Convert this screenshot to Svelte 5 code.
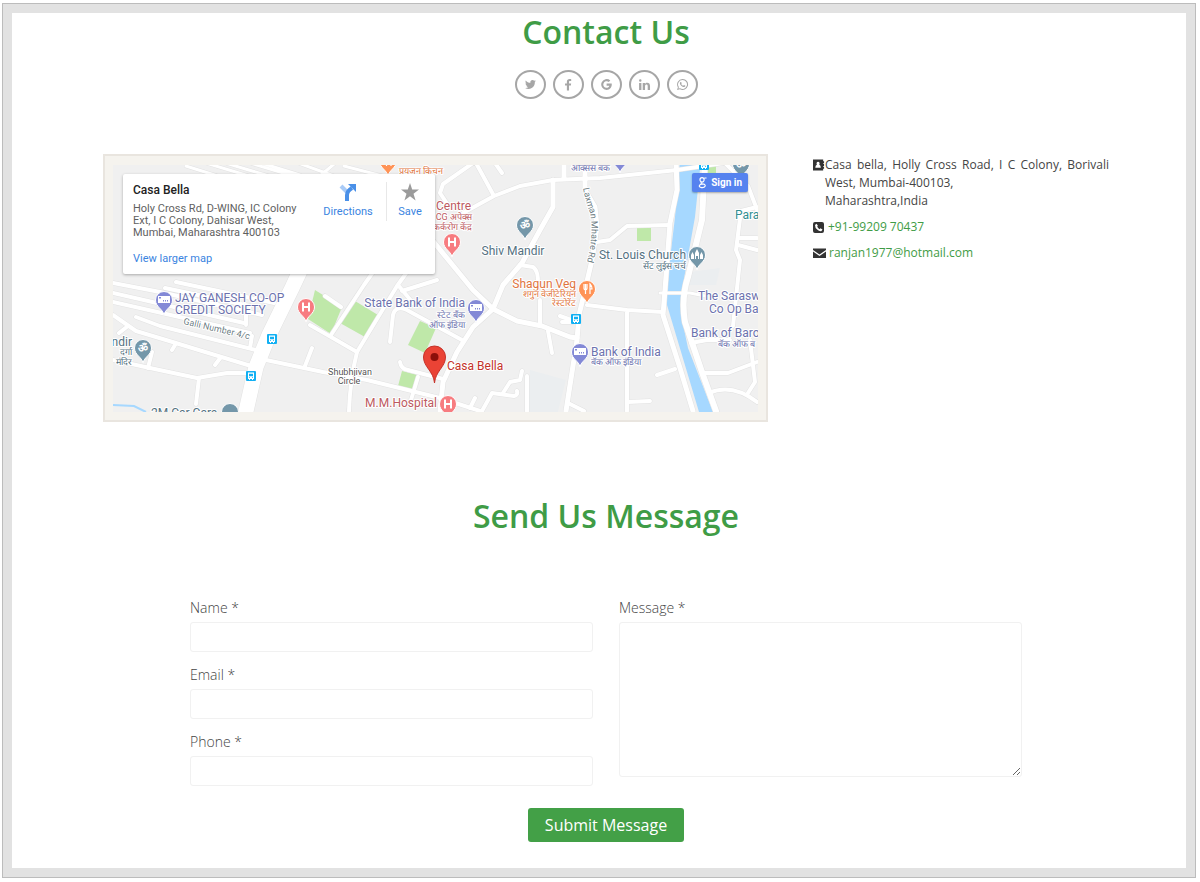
<script>
  // Contact page: social links, location map with address, message form.

  let form = $state({ name: "", email: "", phone: "", message: "" });

  const socials = [
    { name: "Twitter", d: "M22 5.8c-.7.3-1.5.5-2.4.6.9-.5 1.5-1.3 1.8-2.3-.8.5-1.7.8-2.6 1A4.1 4.1 0 0 0 11.8 8.9C8.4 8.7 5.3 7 3.3 4.5c-1.1 1.9-.5 4.3 1.3 5.5-.7 0-1.3-.2-1.9-.5 0 2 1.4 3.7 3.3 4.1-.6.2-1.2.2-1.9.1.5 1.6 2 2.8 3.9 2.9A8.3 8.3 0 0 1 2 18.3 11.7 11.7 0 0 0 20 7.9c.8-.6 1.5-1.3 2-2.1z" },
    { name: "Facebook", d: "M17 2.2V5.7h-2.1c-1.6 0-1.9.8-1.9 1.9V10h3.9l-.5 3.9H13V23H9v-9.1H5.6V10H9V7.1C9 3.8 11 2 14 2c1.4 0 2.6.1 3 .2z" },
    { name: "Google", d: "M12.2 10.3h9.4c.9 6.5-3 11.7-9.4 11.7a10 10 0 1 1 6.8-17.4l-2.9 2.8A6.1 6.1 0 1 0 12 18.2c3 0 4.8-1.7 5.3-4h-5.1z" },
    { name: "LinkedIn", d: "M2 9h4.3v13H2zM4.2 2.5a2.3 2.3 0 1 1 0 4.6 2.3 2.3 0 0 1 0-4.6zM8.7 9h4.2v1.9c.7-1.2 2-2.2 4.2-2.2 3.3 0 5.1 2.2 5.1 6.1V22h-4.3v-6.9c0-1.7-.7-2.9-2.2-2.9-1.7 0-2.7 1.2-2.7 3V22H8.7z" },
    { name: "WhatsApp", d: "M12 2a9.9 9.9 0 0 0-8.5 15L2 22l5.2-1.4A10 10 0 1 0 12 2zm0 1.8a8.2 8.2 0 1 1-4.5 15l-3 .8.8-2.9A8.2 8.2 0 0 1 12 3.8zM8.5 7.3c-.7.2-1.4 1-1.4 2.2 0 2.6 4.6 7.6 8 7.3 1.5-.2 2.4-1.2 2.3-2.5l-2.7-1.3-1.3 1.5c-1.7-.6-3-1.9-3.8-3.5l1-1.2-1.2-2.5z" },
  ];

  // --- map geometry ---
  const greens = [
    "315,290 342,307 331,334 308,319",
    "355,301 378,315 365,337 340,323",
    "420,321 436,328 425,353 408,345",
    "402,371 418,375 412,391 398,386",
    "637,227 651,227 651,241 637,241",
    "706,160 716,160 716,174 706,174",
  ];

  const roads = [
    { w: 3, d: "M186 166L240 183M196 160L262 180M222 162L276 178M240 160L290 175M258 162L300 175M290 160L334 176M334 164L320 176M344 166L390 178" },
    { w: 4, d: "M113 283L160 292L262 315M176 282L274 303M113 293L244 323M113 302L250 333M165 288L250 306" },
    { w: 4, d: "M136 317L160 326L256 350M113 315L136 331L166 340L251 366M119 333L128 326M246 315V325M252 336L250 348M175 345L172 350M215 365L221 357M152 352L148 368" },
    { w: 4, d: "M113 360L150 368L197 378L227 373L247 373M199 378L196 404" },
    { w: 4, d: "M266 360L323 372L367 380L440 398L480 411M312 348L305 366M310 325L331 337L357 352M325 296L341 307" },
    { w: 4, d: "M331 335L364 285L378 265M357 352L397 286L412 265M357 352Q350 380 349 411M402 291L437 280M398 285L413 303" },
    { w: 4, d: "M390 342L393 315Q395 306 405 309L462 340" },
    { w: 5, d: "M428 235L473 290L493 309L517 321L542 326L570 337L577 338" },
    { w: 5, d: "M553 180V207L540 230L522 263L503 285L493 309L473 327L457 352L443 382L440 411" },
    { w: 4, d: "M448 205L440 193L443 184L473 163M476 163L494 196M495 163L502 173M463 213L494 196L520 186L553 180L600 178L677 170L757 158" },
    { w: 4, d: "M520 265L533 267Q540 272 537 290" },
    { w: 5, d: "M564 160V178M585 168V190L595 207L597 227L592 260L585 290L579 315L577 340L566 411" },
    { w: 4, d: "M597 242L610 240L627 226L670 225M587 305L627 310L663 312M627 310V411M628 402L650 401M657 375L675 369M562 322L572 322M568 403L584 411" },
    { w: 5, d: "M676 160L677 190L670 223L665 290L663 315L680 368L693 411" },
    { w: 6, d: "M705 160L702 220L688 277Q681 298 685 322L703 375L716 411" },
    { w: 3, d: "M660 293H690L705 296" },
    { w: 4, d: "M757 207L741 211L736 250L740 260L733 326M738 238H757M738 245L757 250M722 160L748 186L758 212" },
    { w: 4, d: "M691 343L707 340H730M705 373H728L757 362M709 393Q732 383 757 402M750 340L755 382L748 393" },
    { w: 4, d: "M540 300V326M548 331L552 353M527 376V411M482 411L492 393L514 396Q518 395 517 391M503 393L510 382L520 380L522 371M475 398L470 408M560 316L574 321" },
    { w: 4, d: "M400 362Q401 369 408 370L443 379M418 377L411 400" },
    { w: 15, d: "M244 420L256 367L269 335L292 288L306 258" },
  ];

  const colors = { hospital: "#f77c80", place: "#7497a9", bank: "#8389d6", food: "#ff9356" };

  const pins = [
    { x: 452, y: 242, kind: "hospital" },
    { x: 306, y: 307, kind: "hospital" },
    { x: 448, y: 404, kind: "hospital" },
    { x: 525, y: 225, kind: "place", glyph: "ॐ" },
    { x: 143, y: 348, kind: "place", glyph: "ॐ" },
    { x: 697, y: 255, kind: "place", church: true },
    { x: 741, y: 164, kind: "place", glyph: "ॐ" },
    { x: 230, y: 412, kind: "place" },
    { x: 164, y: 300, kind: "bank" },
    { x: 476, y: 308, kind: "bank" },
    { x: 580, y: 352, kind: "bank" },
    { x: 620, y: 158, kind: "bank" },
    { x: 587, y: 289, kind: "food" },
    { x: 388, y: 161, kind: "food" },
  ];

  const stops = [[272, 339], [251, 376], [576, 319], [704, 165]];

  const labels = [
    { x: 175, y: 302, t: "JAY GANESH CO-OP", c: "bank" },
    { x: 175, y: 314, t: "CREDIT SOCIETY", c: "bank" },
    { x: 465, y: 307, t: "State Bank of India", c: "bank", a: "end" },
    { x: 465, y: 318, t: "स्टेट बँक", c: "bank", a: "end", s: true },
    { x: 465, y: 328, t: "ऑफ इंडिया", c: "bank", a: "end", s: true },
    { x: 591, y: 356, t: "Bank of India", c: "bank" },
    { x: 591, y: 365, t: "बॅक ऑफ इंडिया", c: "bank", s: true },
    { x: 698, y: 300, t: "The Sarasw", c: "bank" },
    { x: 709, y: 313, t: "Co Op Ba", c: "bank" },
    { x: 691, y: 337, t: "Bank of Baro", c: "bank" },
    { x: 718, y: 347, t: "बॅक ऑफ ब", c: "bank", s: true },
    { x: 610, y: 171, t: "ॲक्सिस बँक", c: "bank", a: "end", s: true },
    { x: 436, y: 210, t: "Centre", c: "hospital" },
    { x: 472, y: 220, t: "CG अपेक्स", c: "hospital", a: "end", s: true },
    { x: 472, y: 230, t: "कर्करोग केंद्र", c: "hospital", a: "end", s: true },
    { x: 437, y: 407, t: "M.M.Hospital", c: "hospital", a: "end" },
    { x: 399, y: 174, t: "प्रयजन किचन", c: "food", s: true },
    { x: 576, y: 288, t: "Shagun Veg", c: "food", a: "end" },
    { x: 576, y: 297, t: "शगुन वेजीटेरियन", c: "food", a: "end", s: true },
    { x: 576, y: 306, t: "रेस्टोरेंट", c: "food", a: "end", s: true },
    { x: 513, y: 255, t: "Shiv Mandir", c: "place", a: "middle" },
    { x: 686, y: 259, t: "St. Louis Church", c: "place", a: "end" },
    { x: 686, y: 269, t: "सेंट लुईस चर्च", c: "place", a: "end", s: true },
    { x: 132, y: 346, t: "ndir", c: "place", a: "end" },
    { x: 132, y: 355, t: "दर्गा", c: "place", a: "end", s: true },
    { x: 132, y: 365, t: "मंदिर", c: "place", a: "end", s: true },
    { x: 151, y: 417, t: "2M Car Care", c: "place" },
    { x: 735, y: 219, t: "Para", c: "park" },
    { x: 350, y: 375, t: "Shubhjivan", c: "road", a: "middle", s: true },
    { x: 349, y: 384, t: "Circle", c: "road", a: "middle", s: true },
    { x: 447, y: 370, t: "Casa Bella", c: "casa" },
  ];
</script>

<main>
  <h1>Contact Us</h1>

  <nav class="socials" aria-label="Social links">
    {#each socials as s}
      <a href="#{s.name.toLowerCase()}" aria-label={s.name}>
        <svg viewBox="0 0 24 24"><path d={s.d} fill-rule="evenodd" /></svg>
      </a>
    {/each}
  </nav>

  <section class="location">
    <div class="map">
      <svg class="canvas" viewBox="113 165 645 247" role="img" aria-label="Map around Casa Bella">
        <rect class="land" x="113" y="165" width="645" height="247" />
        <path class="pale" d="M530 370L566 380L558 412H528zM690 272L720 268L716 285H688z" />
        {#each greens as points}<polygon class="green" {points} />{/each}
        <path class="water" d="M680 160H701L695 217L682 290L681 315L688 348L713 412H699L667 305V285L675 217z" />
        <path class="creek" d="M113 405L134 406L146 412" />

        {#each roads as r}<path class="edge" d={r.d} stroke-width={r.w + 1} />{/each}
        {#each roads as r}<path class="road" d={r.d} stroke-width={r.w} />{/each}

        <defs>
          <path id="laxman" d="M583 188Q586 203 590 212Q594 235 587 262" />
          <path id="galli" d="M183 324L252 340" />
        </defs>
        <text class="lbl small road-name"><textPath href="#laxman">Laxman Mhatre Rd</textPath></text>
        <text class="lbl small road-name"><textPath href="#galli">Galli Number 4/c</textPath></text>

        {#each stops as [x, y]}
          <g transform="translate({x} {y})">
            <rect class="stop" x="-5" y="-5" width="10" height="10" rx="1" />
            <path fill="#fff" fill-rule="evenodd" d="M-3-3.5H3V3H2V4H1V3H-1V4H-2V3H-3zM-2-2.2V.2H2V-2.2zM-2 1.2V2H-1V1.2zM1 1.2V2H2V1.2z" />
          </g>
        {/each}

        {#each pins as p}
          <g transform="translate({p.x} {p.y})">
            <path class="pin" d="M0 15C-1 9-8.5 7-8.5 0A8.5 8.5 0 0 1 8.5 0C8.5 7 1 9 0 15z" fill={colors[p.kind]} />
            {#if p.kind === "hospital"}
              <path d="M-3-4.5V4.5M3-4.5V4.5M-3 0H3" stroke="#fff" stroke-width="2" />
            {:else if p.kind === "bank"}
              <path fill="#fff" fill-rule="evenodd" d="M-6-4H6V3H-6zM-5-3V-1.5H-3V-3zM-1 0V1.500H0V0zM1 0V1.500H2V0zM3 0V1.500H4V0z" />
            {:else if p.kind === "food"}
              <path d="M-3-5V-1Q-3 1-1.5 1V5M0-5V-1Q0 1-1.5 1M-1.5-5V1M3 5V-5Q5-3 5 0H3" fill="none" stroke="#fff" stroke-width="1.2" />
            {:else if p.church}
              <path fill="#fff" d="M-6 4V0L-4.5-3L-3 0V4zM-2 4V-2L0-6L2-2V4H1V1H-1V4zM3 4V0L4.5-3L6 0V4z" />
            {:else if p.glyph}
              <text class="om" text-anchor="middle" y="4">{p.glyph}</text>
            {/if}
          </g>
        {/each}

        {#each labels as l}
          <text class="lbl {l.c}" class:small={l.s} x={l.x} y={l.y} text-anchor={l.a ?? "start"}>{l.t}</text>
        {/each}

        <path fill="#ea4335" stroke="#c5322a" d="M434.5 383C433.5 371 423.5 367 423.5 357A11 11 0 0 1 445.5 357C445.5 367 435.5 371 434.5 383z" />
        <circle cx="434.5" cy="357" r="4" fill="#8c0f0a" />
      </svg>

      <div class="card">
        <div class="place-info">
          <strong>Casa Bella</strong>
          <p>Holy Cross Rd, D-WING, IC Colony Ext, I C Colony, Dahisar West, Mumbai, Maharashtra 400103</p>
          <a href="#larger">View larger map</a>
        </div>
        <a class="action directions" href="#directions">
          <svg viewBox="0 0 18 18">
            <path d="M2 3L8 9" fill="none" stroke="#a9cbf7" stroke-width="4" />
            <path d="M8 18V12Q8 8 13 5" fill="none" stroke="#4a90e8" stroke-width="4" />
            <path d="M9 1H17V9z" fill="#4a90e8" />
          </svg>
          Directions
        </a>
        <a class="action save" href="#save">
          <svg viewBox="0 0 18 18"><path fill="#9b9b9b" d="M9 0L11.2 6.6H18L12.5 10.7L14.6 17.4L9 13.3L3.4 17.4L5.5 10.7L0 6.6H6.8z" /></svg>
          Save
        </a>
      </div>

      <button class="signin" type="button">
        <svg viewBox="0 0 10 14">
          <path d="M7 2H9.5M4.5 1.5A2.3 2.5 0 1 1 4.5 6.5A2.3 2.5 0 1 1 4.5 1.5M4 6.5Q2 8 5 8.5Q8.5 9 8 11Q7 13 4 12.7Q1 12 1.5 10.5Q2 9 5 8.5" fill="none" stroke="#fff" stroke-width="1.3" />
        </svg>
        Sign in
      </button>
    </div>

    <address>
      <p class="street">
        <svg viewBox="0 0 13 14"><path fill-rule="evenodd" d="M0 1H11V3H12V5H11V6H12V8H11V9H12V11H11V13H0zM5.5 3.5A1.8 1.8 0 0 0 4.3 6.5Q2.5 7.5 2.5 10H8.5Q8.5 7.5 6.7 6.5A1.8 1.8 0 0 0 5.5 3.5z" /></svg>
        <span>Casa bella, Holly Cross Road, I C Colony, Borivali West, Mumbai-400103,<br />Maharashtra,India</span>
      </p>
      <p>
        <svg viewBox="0 0 12 14"><path fill-rule="evenodd" d="M2 2H9Q11 2 11 4V11Q11 13 9 13H2Q0 13 0 11V4Q0 2 2 2zM3.5 3.8L2 5Q2 8 4.2 9.5Q6.5 11.7 8.5 11L9.5 9.5L7.5 8.3L6.5 9.2Q4.8 8.2 4.2 6.6L4.9 5.7z" /></svg>
        <a href="tel:+919920970437">+91-99209 70437</a>
      </p>
      <p>
        <svg class="mail" viewBox="0 0 13 14"><path d="M0 2.5H13V4L6.5 8.5L0 4zM0 5.5L6.5 10L13 5.5V12H0z" /></svg>
        <a href="mailto:ranjan1977@hotmail.com">ranjan1977@hotmail.com</a>
      </p>
    </address>
  </section>

  <h2>Send Us Message</h2>

  <form onsubmit={(e) => e.preventDefault()}>
    <div class="fields">
      <div class="col">
        <label for="name">Name *</label>
        <input id="name" type="text" bind:value={form.name} />
        <label for="email">Email *</label>
        <input id="email" type="email" bind:value={form.email} />
        <label for="phone">Phone *</label>
        <input id="phone" type="tel" bind:value={form.phone} />
      </div>
      <div class="col">
        <label for="message">Message *</label>
        <textarea id="message" bind:value={form.message}></textarea>
      </div>
    </div>
    <button class="submit" type="submit">Submit Message</button>
  </form>
</main>

<style>
  :global(body) { background: #fff; padding: 3px 4px 3px 2px; }
  :global(#app) { border: 1px solid #bcbcbc; }

  main {
    border: 9px solid #e2e2e2;
    padding: 0 0 26px 14px;
    font-family: "Open Sans", sans-serif;
    color: #444;
    background: #fff;
  }
  h1, h2 { margin: 0; font-size: 32px; line-height: 38px; font-weight: 600; color: #3f9c46; text-align: center; }
  h2 { margin-top: 75px; }

  .socials { display: flex; justify-content: center; gap: 7px; margin-top: 19px; }
  .socials a {
    box-sizing: border-box; width: 31px; height: 29px; border: 2px solid #a6a6a6; border-radius: 50%;
    display: flex; align-items: center; justify-content: center;
  }
  .socials svg { width: 13px; height: 13px; fill: #a6a6a6; }

  .location {
    display: grid; grid-template-columns: 665fr 296fr; gap: 45px; align-items: start;
    max-width: 1006px; margin: 55px auto 0;
  }

  /* map */
  .map { position: relative; border: 2px solid #e9e5df; padding: 9px 8px 8px; background: #f5f3ee; font-family: Roboto, sans-serif; }
  .canvas { display: block; width: 100%; overflow: hidden; }
  .land { fill: #f0f0f0; }
  .pale { fill: #ebeef0; }
  .green { fill: #bfe8a9; }
  .water { fill: #a6d8ff; }
  .creek { fill: none; stroke: #a6d8ff; stroke-width: 2; }
  .edge, .road { fill: none; stroke-linecap: round; stroke-linejoin: round; }
  .edge { stroke: #e2e2e2; }
  .road { stroke: #fff; }
  .stop { fill: #12b0f3; }
  .pin { stroke: #fff; stroke-width: 1; }
  .om { font-size: 11px; font-weight: 700; fill: #fff; }
  .lbl { font-size: 12px; fill: #555; stroke: #fff; stroke-width: 2px; stroke-linejoin: round; paint-order: stroke; }
  .lbl.small { font-size: 9px; }
  .lbl.bank { fill: #6c72ae; }
  .lbl.hospital { fill: #bd5a5f; }
  .lbl.food { fill: #df7440; }
  .lbl.place { fill: #54717f; }
  .lbl.park { fill: #2f8f93; }
  .lbl.road-name { fill: #6b7b82; }
  .lbl.casa { fill: #c3332a; }

  .card {
    position: absolute; left: 18px; top: 18px; box-sizing: border-box; width: 312px; height: 100px;
    display: flex; padding: 8px 0 0 10px; background: #fff; border-radius: 2px; box-shadow: 0 1px 3px rgba(0, 0, 0, 0.3);
    font-size: 11px; line-height: 12px;
  }
  .card a { color: #3a84df; text-decoration: none; }
  .place-info { width: 168px; margin-right: 9px; }
  .place-info strong { display: block; font-size: 12px; line-height: 16px; font-weight: 500; color: #222; }
  .place-info p { margin: 5px 0 14px; color: #5f5f5f; }
  .action { display: flex; flex-direction: column; align-items: center; gap: 5px; height: 38px; padding-top: 1px; }
  .action svg { width: 18px; height: 18px; }
  .directions { width: 76px; border-right: 1px solid #e8e8e8; }
  .save { width: 46px; }

  .signin {
    position: absolute; right: 18px; top: 17px; display: flex; align-items: center; gap: 4px; height: 19px; padding: 0 6px;
    border: 0; border-radius: 2px; background: #5582ef; color: #fff; font: 700 10px/19px Roboto, sans-serif;
    box-shadow: 0 1px 2px rgba(0, 0, 0, 0.3);
  }
  .signin svg { width: 9px; height: 13px; }

  address { font-style: normal; font-size: 12px; line-height: 18px; padding-top: 2px; }
  address p { display: flex; align-items: center; gap: 3px; margin: 0 0 8px; }
  address svg { flex: none; width: 12px; height: 14px; fill: #333; }
  address .mail { width: 13px; }
  address a { color: #3f9c46; text-decoration: none; }
  .street { align-items: flex-start; gap: 0; text-align: justify; }
  .street svg { width: 12px; margin-top: 2px; }

  /* message form */
  form { max-width: 832px; margin: 62px auto 0; text-align: center; }
  .fields { display: grid; grid-template-columns: 1fr 1fr; gap: 26px; text-align: left; }
  .col { display: flex; flex-direction: column; }
  label { font-size: 14px; line-height: 22px; font-weight: 300; margin-bottom: 3px; }
  input, textarea {
    box-sizing: border-box; width: 100%; height: 30px; margin: 0 0 12px; padding: 4px 8px;
    border: 1px solid #f1f1f1; border-radius: 3px; background: #fff; font: 14px "Open Sans", sans-serif; color: #444;
  }
  input:last-child, textarea { margin-bottom: 0; }
  textarea { height: 155px; resize: both; }
  .submit {
    display: block; height: 34px; margin: 22px auto 0; padding: 0 17px; border: 0; border-radius: 3px;
    background: #43a047; color: #fff; font: 16px "Open Sans", sans-serif;
  }
</style>
